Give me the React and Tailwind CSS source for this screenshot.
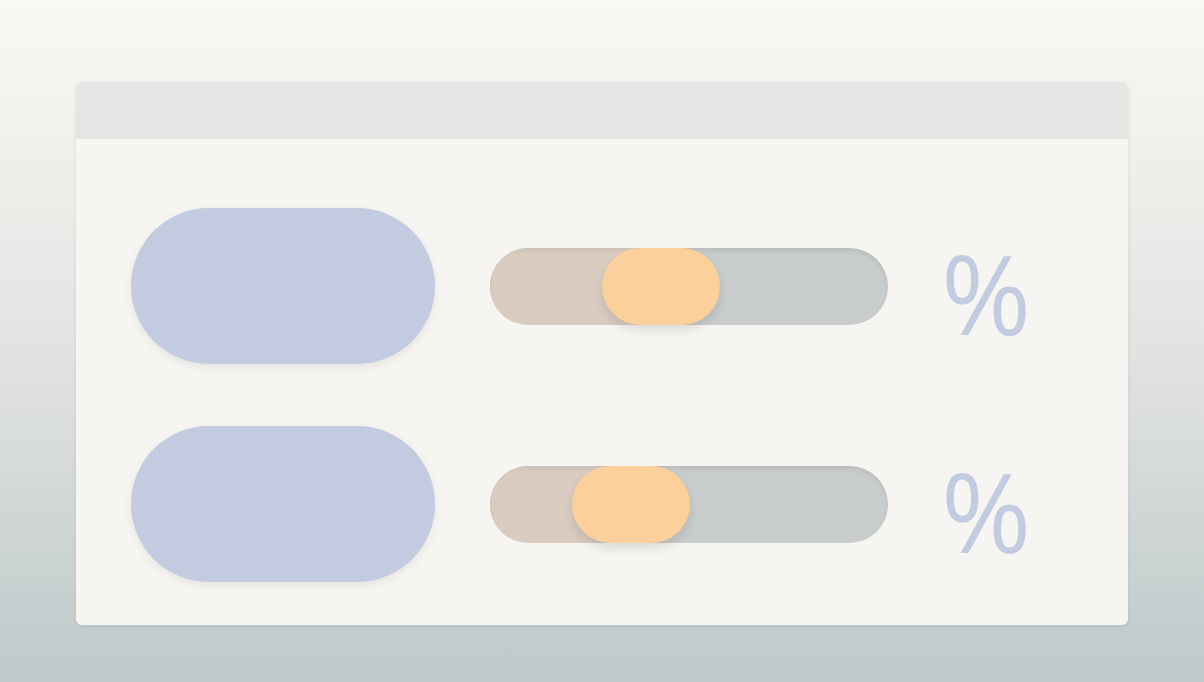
import React from 'react';

const rows = [
  { thumb: 112 },
  { thumb: 82 },
];

const Row = ({ thumb }) => (
  <div className="flex items-center h-[156px]">
    <div className="w-[304px] h-[156px] rounded-full bg-[#c2cbdf] shadow-[0_3px_8px_rgba(0,0,0,0.08)]" />
    <div className="relative ml-[55px] w-[398px] h-[77px] rounded-full bg-[#c8cccc] overflow-hidden shadow-[inset_0_3px_4px_rgba(0,0,0,0.08)]">
      <div className="absolute left-0 top-0 h-full bg-[#d9cbc0] shadow-[inset_0_3px_4px_rgba(0,0,0,0.06)]" style={{ width: thumb + 59 }} />
    </div>
    <div className="relative -ml-[398px] w-[398px] h-[77px]">
      <div
        className="absolute top-0 h-[77px] w-[118px] rounded-full bg-[#fcd09a] shadow-[0_6px_10px_rgba(0,0,0,0.1)]"
        style={{ left: thumb }}
      />
    </div>
    <div className="ml-[53px] pt-[12px] text-[109px] leading-none text-[#c2cbdf] font-['Open_Sans',sans-serif] font-normal">%</div>
  </div>
);

export default function App() {
  return (
    <div className="w-[1204px] h-[682px] bg-gradient-to-b from-[#f9f8f4] via-[#e3e4e2] to-[#bec9ca] pt-[82px] pl-[76px]">
      <div className="w-[1052px] h-[543px] rounded-[6px] bg-[#f6f5f1] overflow-hidden shadow-[0_1px_4px_rgba(0,0,0,0.08)]">
        <div className="h-[57px] bg-[#e6e5e3]" />
        <div className="pl-[55px] pt-[69px] flex flex-col gap-[62px]">
          {rows.map((r, i) => (
            <Row key={i} thumb={r.thumb} />
          ))}
        </div>
      </div>
    </div>
  );
}
